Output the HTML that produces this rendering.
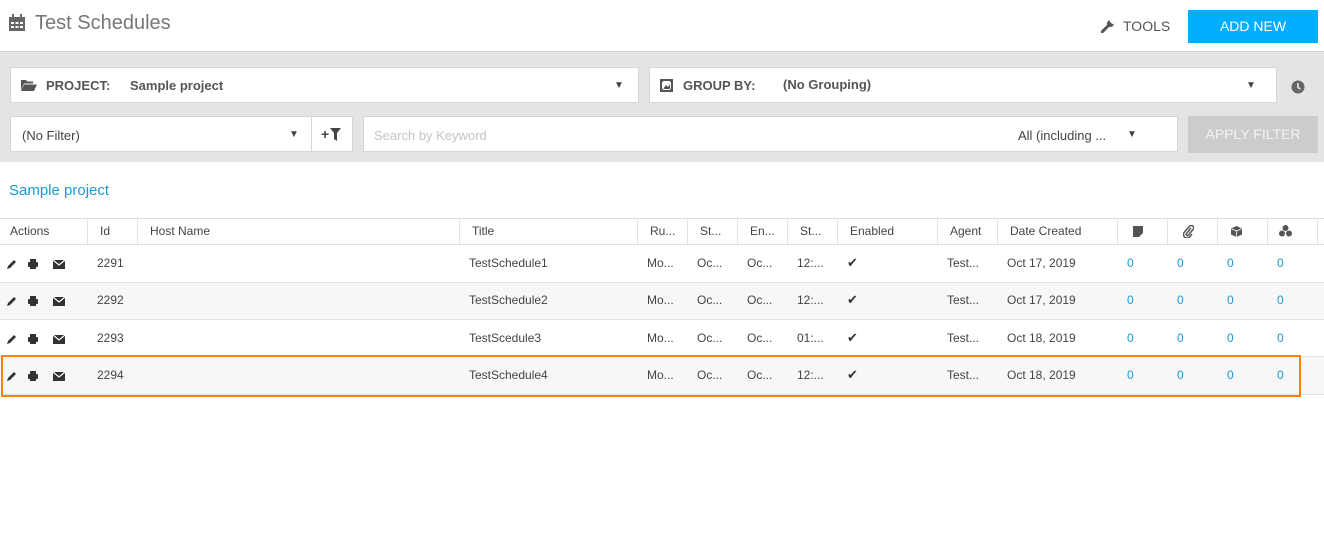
<!DOCTYPE html>
<html><head><meta charset="utf-8"><style>
*{box-sizing:border-box;margin:0;padding:0}
body{width:1324px;height:550px;background:#fff;font-family:"Liberation Sans",sans-serif;color:#444;position:relative;overflow:hidden;font-size:12px}
.a{position:absolute}
.band{left:0;top:51px;width:1324px;height:111px;background:#e4e4e4;border-top:1px solid #d4d4d4}
.box{background:#fff;border:1px solid #d6d6d6;height:36px}
.lbl{font-size:13px;color:#555;top:10px}
.th{top:218px;height:27px;border-top:1px solid #ddd;border-bottom:1px solid #e2e2e2;width:1324px;left:0}
.tr{left:0;width:1324px;border-bottom:1px solid #e2e2e2}
.c{position:absolute;font-size:12px;color:#444;white-space:nowrap}
.v{position:absolute;width:1px;background:#e2e2e2;top:218px;height:27px}
.z{color:#1a9ad6}
</style></head><body>
<svg class="a" style="left:9px;top:14px" width="16" height="17" viewBox="0 0 16 17"><rect x="0" y="3" width="16" height="14" fill="#666"/><rect x="3" y="0" width="2" height="5" fill="#666"/><rect x="11" y="0" width="2" height="5" fill="#666"/><g fill="#fff"><rect x="2" y="8" width="3" height="2"/><rect x="6.5" y="8" width="3" height="2"/><rect x="11" y="8" width="3" height="2"/><rect x="2" y="12" width="3" height="2"/><rect x="6.5" y="12" width="3" height="2"/><rect x="11" y="12" width="3" height="2"/></g></svg>
<div class="a" style="left:35px;top:12px;font-size:20px;color:#777">Test Schedules</div>
<svg class="a" style="left:1101px;top:19px" width="14" height="14" viewBox="0 0 14 14"><path d="M1 13 L7 7" stroke="#555" stroke-width="3" stroke-linecap="round"/><circle cx="9.5" cy="4.5" r="3.5" fill="#555"/><rect x="9" y="0" width="5" height="4" fill="#fff" transform="rotate(45 11 2)"/></svg>
<div class="a" style="left:1123px;top:18px;font-size:14px;color:#555">TOOLS</div>
<div class="a" style="left:1188px;top:10px;width:130px;height:33px;background:#00aeff;color:#fff;font-size:14px;text-align:center;line-height:33px">ADD NEW</div>
<div class="a band"></div>
<div class="a box" style="left:10px;top:67px;width:629px"></div>
<svg class="a" style="left:21px;top:80px" width="16" height="11" viewBox="0 0 16 11"><path d="M0 0h5l1 1.5h6v2H3L0 10z M3 4.5h13L13 11H0z" fill="#555"/></svg>
<div class="a lbl" style="left:46px;top:78px;font-weight:bold;color:#555">PROJECT:</div>
<div class="a lbl" style="left:130px;top:78px;font-weight:bold;color:#555">Sample project</div>
<div class="a" style="left:614px;top:80px;font-size:10px;color:#444">▼</div>
<div class="a box" style="left:649px;top:67px;width:628px"></div>
<svg class="a" style="left:660px;top:79px" width="13" height="13" viewBox="0 0 13 13"><rect x="1" y="1" width="11" height="11" fill="none" stroke="#555" stroke-width="2"/><rect x="0" y="0" width="3" height="3" fill="#555"/><rect x="10" y="0" width="3" height="3" fill="#555"/><rect x="0" y="10" width="3" height="3" fill="#555"/><rect x="10" y="10" width="3" height="3" fill="#555"/><path d="M3 10l3-4 2 2 2-3v5z" fill="#555"/></svg>
<div class="a lbl" style="left:683px;top:78px;font-weight:bold;color:#555">GROUP BY:</div>
<div class="a lbl" style="left:783px;top:77px;font-weight:bold;color:#555">(No Grouping)</div>
<div class="a" style="left:1246px;top:80px;font-size:10px;color:#444">▼</div>
<svg class="a" style="left:1291px;top:80px" width="14" height="14" viewBox="0 0 14 14"><circle cx="7" cy="7" r="6.5" fill="#666"/><path d="M7 3v4.5l2.5 1.5" stroke="#e4e4e4" stroke-width="1.6" fill="none"/></svg>
<div class="a box" style="left:10px;top:116px;width:343px"></div>
<div class="a" style="left:311px;top:117px;width:1px;height:34px;background:#d6d6d6"></div>
<div class="a" style="left:22px;top:128px;font-size:13px;color:#444">(No Filter)</div>
<div class="a" style="left:289px;top:129px;font-size:10px;color:#444">▼</div>
<div class="a" style="left:321px;top:126px;font-size:14px;font-weight:bold;color:#444">+</div>
<svg class="a" style="left:330px;top:128px" width="11" height="13" viewBox="0 0 11 13"><path d="M0 0h11L7 5v8L4 11V5z" fill="#444"/></svg>
<div class="a box" style="left:363px;top:116px;width:815px"></div>
<div class="a" style="left:374px;top:128px;font-size:13px;color:#c4c4c4">Search by Keyword</div>
<div class="a" style="left:1018px;top:128px;font-size:13px;color:#444">All (including ...</div>
<div class="a" style="left:1127px;top:129px;font-size:10px;color:#444">▼</div>
<div class="a" style="left:1188px;top:116px;width:130px;height:37px;background:#ccc;color:#f2f2f2;font-size:14px;text-align:center;line-height:37px">APPLY FILTER</div>
<div class="a" style="left:9px;top:182px;font-size:15px;color:#1a9ad6">Sample project</div>
<div class="a th"></div>
<div class="v" style="left:87px"></div><div class="v" style="left:137px"></div><div class="v" style="left:459px"></div><div class="v" style="left:637px"></div><div class="v" style="left:687px"></div><div class="v" style="left:737px"></div><div class="v" style="left:787px"></div><div class="v" style="left:837px"></div><div class="v" style="left:937px"></div><div class="v" style="left:997px"></div><div class="v" style="left:1117px"></div><div class="v" style="left:1167px"></div><div class="v" style="left:1217px"></div><div class="v" style="left:1267px"></div><div class="v" style="left:1317px"></div>
<div class="c" style="left:10px;top:224px">Actions</div>
<div class="c" style="left:100px;top:224px">Id</div>
<div class="c" style="left:150px;top:224px">Host Name</div>
<div class="c" style="left:472px;top:224px">Title</div>
<div class="c" style="left:650px;top:224px">Ru...</div>
<div class="c" style="left:700px;top:224px">St...</div>
<div class="c" style="left:750px;top:224px">En...</div>
<div class="c" style="left:800px;top:224px">St...</div>
<div class="c" style="left:850px;top:224px">Enabled</div>
<div class="c" style="left:950px;top:224px">Agent</div>
<div class="c" style="left:1010px;top:224px">Date Created</div>
<svg class="a" style="left:1133px;top:226px" width="10" height="11" viewBox="0 0 10 11"><path d="M0 0h10v7l-4 4H0z" fill="#555"/></svg>
<svg class="a" style="left:1183px;top:225px" width="11" height="13" viewBox="0 0 11 13"><path d="M8 3L3.5 8.5a1.2 1.2 0 0 0 1.8 1.6L10 4.5a2.4 2.4 0 0 0-3.5-3.3L1.5 7a3.5 3.5 0 0 0 5 5L9 9" stroke="#555" stroke-width="1.5" fill="none"/></svg>
<svg class="a" style="left:1231px;top:226px" width="11" height="11" viewBox="0 0 11 11"><path d="M5.5 0L11 2.5v6L5.5 11 0 8.5v-6z" fill="#555"/><path d="M0.5 2.7L5.5 5l5-2.3M5.5 5v6" stroke="#fff" stroke-width="0.8" fill="none"/></svg>
<svg class="a" style="left:1279px;top:225px" width="13" height="12" viewBox="0 0 13 12"><circle cx="6.5" cy="3" r="3" fill="#555"/><circle cx="3" cy="8.5" r="3" fill="#555"/><circle cx="10" cy="8.5" r="3" fill="#555"/></svg>

<div class="a tr" style="top:245px;height:38px;background:#fff"></div>
<div class="a tr" style="top:283px;height:37px;background:#f7f7f7"></div>
<div class="a tr" style="top:320px;height:37px;background:#fff"></div>
<div class="a tr" style="top:357px;height:38px;background:#f7f7f7"></div>
<div class="a" style="left:1px;top:355px;width:1300px;height:42px;border:2px solid #f7820f"></div>

<div id="rows"></div>
<script>
var d=[[263,'2291','TestSchedule1','12:...','Oct 17, 2019'],[300,'2292','TestSchedule2','12:...','Oct 17, 2019'],[338,'2293','TestScedule3','01:...','Oct 18, 2019'],[375,'2294','TestSchedule4','12:...','Oct 18, 2019']];
var h='';
d.forEach(function(r){var t=r[0]-7;
h+='<svg class="a" style="left:6px;top:'+(t+2)+'px" width="60" height="12" viewBox="0 0 60 12"><path d="M1 11l1-3 6-6 2 2-6 6z" fill="#333"/><rect x="24" y="1" width="6" height="3" fill="#333"/><rect x="22" y="4" width="10" height="5" rx="1" fill="#333"/><rect x="24" y="8" width="6" height="3" fill="#333"/><rect x="47" y="2" width="12" height="9" fill="#333"/><path d="M47 2l6 5 6-5" stroke="#fff" stroke-width="1.2" fill="none"/></svg>';
h+='<div class="c" style="left:97px;top:'+t+'px">'+r[1]+'</div>';
h+='<div class="c" style="left:469px;top:'+t+'px">'+r[2]+'</div>';
h+='<div class="c" style="left:647px;top:'+t+'px">Mo...</div>';
h+='<div class="c" style="left:697px;top:'+t+'px">Oc...</div>';
h+='<div class="c" style="left:747px;top:'+t+'px">Oc...</div>';
h+='<div class="c" style="left:797px;top:'+t+'px">'+r[3]+'</div>';
h+='<div class="c" style="left:847px;top:'+(t-1)+'px;font-size:13px;color:#333">✔</div>';
h+='<div class="c" style="left:947px;top:'+t+'px">Test...</div>';
h+='<div class="c" style="left:1007px;top:'+t+'px">'+r[4]+'</div>';
[1127,1177,1227,1277].forEach(function(x){h+='<div class="c z" style="left:'+x+'px;top:'+t+'px">0</div>';});
});
document.getElementById('rows').innerHTML=h;
</script>
</body></html>
